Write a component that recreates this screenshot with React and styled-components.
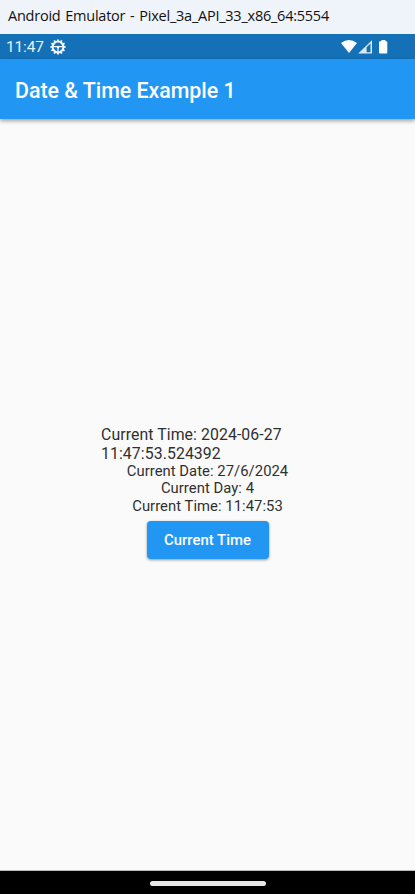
import React from "react";
import styled, { createGlobalStyle } from "styled-components";

const GlobalStyle = createGlobalStyle`
  * { box-sizing: border-box; }
  body { margin: 0; background: #fafafa; font-family: Roboto, sans-serif; }
`;

const Screen = styled.div`
  display: flex;
  flex-direction: column;
  width: 415px;
  height: 894px;
  overflow: hidden;
  background: #fafafa;
`;

const WindowTitle = styled.div`
  flex: 0 0 34px;
  padding: 5px 8px 0;
  background: #eff4fa;
  color: #111;
  font: 14.5px/22px "Open Sans", "Noto Sans", sans-serif;
  letter-spacing: -0.24px;
  word-spacing: 1.3px;
  white-space: nowrap;
`;

const StatusBar = styled.div`
  flex: 0 0 25px;
  display: flex;
  align-items: center;
  padding: 0 26px 0 6px;
  background: #1470b7;
  color: #e9f2f9;
`;

const Clock = styled.span`
  width: 44px;
  height: 25px;
  font-size: 15.4px;
  letter-spacing: -0.1px;
  line-height: 25px;
  padding-top: 1px;
`;

const StatusIcons = styled.div`
  display: flex;
  align-items: center;
  margin-left: auto;
`;

const AppBar = styled.header`
  flex: 0 0 60px;
  display: flex;
  align-items: center;
  padding: 4px 15px 0;
  background: #2196f3;
  box-shadow: 0 2px 4px rgba(0, 0, 0, 0.36);
  z-index: 1;
`;

const Title = styled.h1`
  margin: 0;
  color: #fff;
  font-size: 21.4px;
  font-weight: 500;
  line-height: 26px;
  letter-spacing: -0.03px;
  white-space: nowrap;
`;

const Body = styled.main`
  flex: 1;
  display: flex;
  flex-direction: column;
  align-items: center;
  padding-top: 306px;
  color: #303030;
`;

const Timestamp = styled.div`
  width: 213px;
  font-size: 15.84px;
  line-height: 19px;
  letter-spacing: 0.08px;
  white-space: pre-line;
`;

const Line = styled.div`
  font-size: 14.8px;
  line-height: 17.3px;
  letter-spacing: 0.05px;
`;

const Button = styled.button`
  width: 122px;
  height: 38px;
  margin-top: 6px;
  padding: 1px 0 0;
  border: 0;
  border-radius: 4px;
  background: #2196f3;
  color: #fff;
  box-shadow: 0 1px 3px rgba(0, 0, 0, 0.4);
  font: 500 14.9px/18px Roboto, sans-serif;
`;

const NavigationBar = styled.footer`
  flex: 0 0 24px;
  display: flex;
  justify-content: center;
  padding-top: 10px;
  border-top: 1px solid #b9bdbb;
  background: #000;
`;

const HomeHandle = styled.div`
  width: 116px;
  height: 5px;
  border-radius: 2.5px;
  background: #e8e8e8;
`;

const teeth = Array.from({ length: 12 }, (_, i) => i * 30);

function GearIcon() {
  return (
    <svg width="16" height="16" viewBox="0 0 16 16" fill="none" stroke="#f2f7fb">
      <circle cx="8" cy="8" r="5.4" strokeWidth="2" />
      {teeth.map((angle) => (
        <path key={angle} d="M8 2.5V.4" strokeWidth="1.8" transform={`rotate(${angle} 8 8)`} />
      ))}
      <path d="M3 7.7h10M8 8v5" strokeWidth="1.3" />
      <circle cx="8" cy="8" r="1.3" fill="#f2f7fb" stroke="none" />
    </svg>
  );
}

function SignalIcons() {
  return (
    <svg width="48" height="16" viewBox="0 0 48 16" fill="#fff">
      <path d="M0 4Q8-1.8 16 4L8 14Z" />
      <path d="M31 1.2v13.3H17.2Z" fill="#dceaf5" />
      <path d="M25.6 8.3 29.5 4.4v8.8h-3.9Z" fill="#1470b7" />
      <path d="M40.4 1h4v1.3h.9q1 0 1 1v10.2q0 1-1 1h-6.3q-1 0-1-1V3.3q0-1 1-1h1.4Z" />
    </svg>
  );
}

export default function App() {
  return (
    <>
      <GlobalStyle />
      <Screen>
        <WindowTitle>Android Emulator - Pixel_3a_API_33_x86_64:5554</WindowTitle>
        <StatusBar>
          <Clock>11:47</Clock>
          <GearIcon />
          <StatusIcons>
            <SignalIcons />
          </StatusIcons>
        </StatusBar>
        <AppBar>
          <Title>Date &amp; Time Example 1</Title>
        </AppBar>
        <Body>
          <Timestamp>{"Current Time: 2024-06-27\n11:47:53.524392"}</Timestamp>
          <Line>Current Date: 27/6/2024</Line>
          <Line>Current Day: 4</Line>
          <Line>Current Time: 11:47:53</Line>
          <Button>Current Time</Button>
        </Body>
        <NavigationBar>
          <HomeHandle />
        </NavigationBar>
      </Screen>
    </>
  );
}
